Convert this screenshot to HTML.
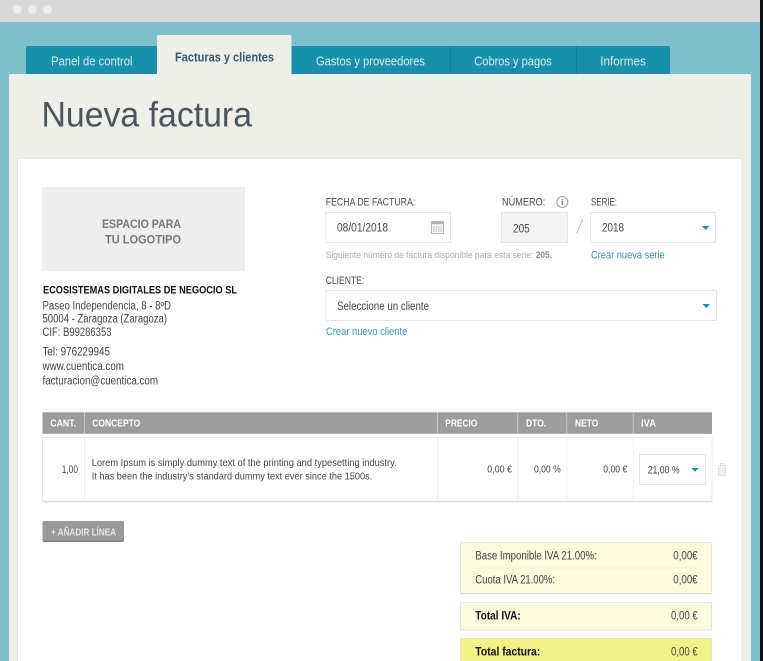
<!DOCTYPE html>
<html lang="es">
<head>
<meta charset="utf-8">
<title>Nueva factura</title>
<style>
html,body{margin:0;padding:0;width:763px;height:661px;overflow:hidden;background:#fff}
svg{display:block;position:absolute;left:0;top:0}
text{font-family:"Liberation Sans",sans-serif;white-space:pre}
.b{font-weight:bold}
.t{font-size:11.5px;fill:#444}
.l{font-size:11px;fill:#4a4a4a}
.k{font-size:11px;fill:#2f9ab0}
.h{font-size:10px;font-weight:bold;fill:#fff}
.tab{font-size:13px;fill:#d9eef2}
</style>
</head>
<body>
<svg width="763" height="661" viewBox="0 0 763 661" xmlns="http://www.w3.org/2000/svg">
<rect x="0" y="0" width="760" height="22" fill="#d8d8d8"/>
<rect x="0" y="22" width="760" height="639" fill="#7dc0cc"/>
<rect x="760" y="0" width="3" height="661" fill="#111"/>
<circle cx="17.300" cy="9.500" r="4.500" fill="#eeeee6"/>
<circle cx="32.300" cy="9.500" r="4.500" fill="#eeeee6"/>
<circle cx="47.300" cy="9.500" r="4.500" fill="#eeeee6"/>

<path d="M26 75V48a2 2 0 0 1 2-2H668a2 2 0 0 1 2 2V75Z" fill="#1690ab"/>
<path d="M450.500 46V75M576.500 46V75" stroke="#117f9a" fill="none"/>
<rect x="9" y="74" width="742" height="600" rx="2" fill="#efefea"/>
<path d="M157 75V37a2 2 0 0 1 2-2H289.500a2 2 0 0 1 2 2V75Z" fill="#efefea"/>
<text class="tab" x="51" y="65.500" textLength="81.500" lengthAdjust="spacingAndGlyphs">Panel de control</text>
<text class="b" x="175" y="61.500" font-size="12.500" fill="#2f5a70" textLength="99" lengthAdjust="spacingAndGlyphs">Facturas y clientes</text>
<text class="tab" x="316" y="65.500" textLength="109" lengthAdjust="spacingAndGlyphs">Gastos y proveedores</text>
<text class="tab" x="474.300" y="65.500" textLength="77.500" lengthAdjust="spacingAndGlyphs">Cobros y pagos</text>
<text class="tab" x="600.300" y="65.500" textLength="45.500" lengthAdjust="spacingAndGlyphs">Informes</text>
<text x="41.500" y="126.700" font-size="35.500" fill="#4a555d" textLength="210.500" lengthAdjust="spacingAndGlyphs">Nueva factura</text>

<rect x="17.500" y="158.500" width="724.500" height="520" fill="#fff" stroke="#e5e5e1"/>

<rect x="42" y="187" width="203" height="84" fill="#eee"/>
<text class="b" x="102" y="228" font-size="11.500" fill="#777" textLength="79" lengthAdjust="spacingAndGlyphs">ESPACIO PARA</text>
<text class="b" x="105" y="243.500" font-size="11.500" fill="#777" textLength="76" lengthAdjust="spacingAndGlyphs">TU LOGOTIPO</text>
<text class="b" x="43" y="293.300" font-size="11px" fill="#111" textLength="194" lengthAdjust="spacingAndGlyphs">ECOSISTEMAS DIGITALES DE NEGOCIO SL</text>
<text class="t" x="42.500" y="309.500" textLength="128.500" lengthAdjust="spacingAndGlyphs">Paseo Independencia, 8 - 8ºD</text>
<text class="t" x="42.500" y="322.700" textLength="124.500" lengthAdjust="spacingAndGlyphs">50004 - Zaragoza (Zaragoza)</text>
<text class="t" x="42.500" y="336" textLength="69" lengthAdjust="spacingAndGlyphs">CIF: B99286353</text>
<text class="t" x="42.500" y="355.700" textLength="67.500" lengthAdjust="spacingAndGlyphs">Tel: 976229945</text>
<text class="t" x="42.500" y="370" textLength="81.500" lengthAdjust="spacingAndGlyphs">www.cuentica.com</text>
<text class="t" x="42.500" y="384.300" textLength="115.500" lengthAdjust="spacingAndGlyphs">facturacion@cuentica.com</text>

<text class="l" x="325.700" y="205.300" textLength="89.600" lengthAdjust="spacingAndGlyphs">FECHA DE FACTURA:</text>
<rect x="326" y="212.500" width="124.500" height="30" fill="#fff" stroke="#e6e6e6"/>
<text class="t" x="337" y="231.700" textLength="51" lengthAdjust="spacingAndGlyphs">08/01/2018</text>
<g fill="none" stroke="#b4b4b4">
<rect x="431.500" y="221.500" width="12" height="12" fill="#f6f6f6"/>
<path d="M431.500 223h12" stroke-width="2.500"/>
<path d="M433 227h9M433 229h9M433 231h9" stroke-dasharray="1.500 1" stroke-width="1"/>
</g>

<text class="l" x="502" y="205.300" textLength="43.300" lengthAdjust="spacingAndGlyphs">NÚMERO:</text>
<circle cx="562.300" cy="202" r="5.500" fill="none" stroke="#a0a0a0" stroke-width="1.100"/>
<rect x="561.600" y="201" width="1.500" height="4" fill="#888"/>
<rect x="561.600" y="198.800" width="1.500" height="1.400" fill="#888"/>
<rect x="501.500" y="212.500" width="66" height="30" fill="#f3f3f3" stroke="#e4e4e4"/>
<text class="t" x="513" y="232.300" textLength="16.700" lengthAdjust="spacingAndGlyphs">205</text>
<path d="M576.700 233.300L582.700 219.300" stroke="#b0b0b0" fill="none"/>

<text class="l" x="591" y="205.300" textLength="26" lengthAdjust="spacingAndGlyphs">SERIE:</text>
<rect x="590.500" y="212.500" width="125" height="30" fill="#fff" stroke="#e6e6e6"/>
<text class="t" x="602" y="231.700" textLength="22" lengthAdjust="spacingAndGlyphs">2018</text>
<path d="M702 226h7.500l-3.750 4z" fill="#1690ab"/>

<text x="325.700" y="258" font-size="9.500px" fill="#aaa" textLength="207.600" lengthAdjust="spacingAndGlyphs">Siguiente número de factura disponible para esta serie:</text>
<text class="b" x="535.700" y="258" font-size="9.500px" fill="#888" textLength="16.300" lengthAdjust="spacingAndGlyphs">205.</text>
<text class="k" x="591" y="258.700" textLength="73.700" lengthAdjust="spacingAndGlyphs">Crear nueva serie</text>

<text class="l" x="325.700" y="284" textLength="38.600" lengthAdjust="spacingAndGlyphs">CLIENTE:</text>
<rect x="326" y="290.500" width="390.500" height="30" fill="#fff" stroke="#e6e6e6"/>
<text class="t" x="337" y="310" textLength="92" lengthAdjust="spacingAndGlyphs">Seleccione un cliente</text>
<path d="M702.500 304h7.500l-3.750 4z" fill="#1690ab"/>
<text class="k" x="326" y="335" textLength="81.300" lengthAdjust="spacingAndGlyphs">Crear nuevo cliente</text>

<rect x="42.500" y="412.300" width="669.500" height="21.500" fill="#9b9c9b"/>
<path d="M84.500 412v22M437.500 412v22M517.700 412v22M566.700 412v22M633.300 412v22" stroke="#c8c8c8" fill="none"/>
<text class="h" x="50.300" y="426.500" textLength="25.700" lengthAdjust="spacingAndGlyphs">CANT.</text>
<text class="h" x="92.300" y="426.500" textLength="48" lengthAdjust="spacingAndGlyphs">CONCEPTO</text>
<text class="h" x="445.300" y="426.500" textLength="32" lengthAdjust="spacingAndGlyphs">PRECIO</text>
<text class="h" x="526" y="426.500" textLength="20.300" lengthAdjust="spacingAndGlyphs">DTO.</text>
<text class="h" x="575" y="426.500" textLength="23.300" lengthAdjust="spacingAndGlyphs">NETO</text>
<text class="h" x="641" y="426.500" textLength="15" lengthAdjust="spacingAndGlyphs">IVA</text>

<rect x="42.500" y="437.500" width="669.500" height="64" fill="#fff" stroke="#e8e8e8"/>
<path d="M42.500 501.500H712" stroke="#dcdcdc" stroke-width="1.500"/>
<path d="M84.500 438v63M437.500 438v63M517.700 438v63M566.700 438v63M633.300 438v63" stroke="#f0f0f0" fill="none"/>
<text x="61.700" y="473" font-size="11px" fill="#444" textLength="16.300" lengthAdjust="spacingAndGlyphs">1,00</text>
<text x="91.700" y="466" font-size="10.500px" fill="#444" textLength="305" lengthAdjust="spacingAndGlyphs">Lorem Ipsum is simply dummy text of the printing and typesetting industry.</text>
<text x="91.700" y="479.300" font-size="10.500px" fill="#444" textLength="280.600" lengthAdjust="spacingAndGlyphs">It has been the industry's standard dummy text ever since the 1500s.</text>
<text x="487.300" y="472.700" font-size="10.500px" fill="#444" textLength="24.700" lengthAdjust="spacingAndGlyphs">0,00 €</text>
<text x="534" y="472.700" font-size="10.500px" fill="#444" textLength="26.700" lengthAdjust="spacingAndGlyphs">0,00 %</text>
<text x="603.300" y="472.700" font-size="10.500px" fill="#444" textLength="24" lengthAdjust="spacingAndGlyphs">0,00 €</text>
<rect x="639.500" y="454.500" width="66" height="30" fill="#fff" stroke="#e6e6e6"/>
<text x="647.700" y="473.300" font-size="11px" fill="#444" textLength="32" lengthAdjust="spacingAndGlyphs">21,00 %</text>
<path d="M691.300 468h7.500l-3.750 3.800z" fill="#1690ab"/>
<g fill="none" stroke="#dcdcdc">
<path d="M717.500 465.500h9M720.500 465v-1.500h3V465"/>
<path d="M718.500 466.500v9h7v-9" fill="#eee"/>
</g>

<rect x="42.500" y="521" width="81.500" height="21" rx="2" fill="#7d7d7d"/>
<rect x="42.500" y="521" width="81.500" height="19.500" rx="2" fill="#999a99"/>
<text x="51" y="535.300" font-size="10px" font-weight="bold" fill="#e6e6e6" textLength="65" lengthAdjust="spacingAndGlyphs">+ AÑADIR LÍNEA</text>

<rect x="460.500" y="542.500" width="251" height="51" fill="#fbfadd" stroke="#e6e6e0"/>
<path d="M460.500 593.800h251" stroke="#deded8"/>
<text class="t" x="475.300" y="559.300" textLength="121.400" lengthAdjust="spacingAndGlyphs">Base Imponible IVA 21.00%:</text>
<text class="t" x="673.300" y="559.300" textLength="24.400" lengthAdjust="spacingAndGlyphs">0,00€</text>
<path d="M475 568h223" stroke="#efefdc" fill="none"/>
<text class="t" x="475.300" y="583.700" textLength="79.700" lengthAdjust="spacingAndGlyphs">Cuota IVA 21.00%:</text>
<text class="t" x="673.300" y="583.700" textLength="24.400" lengthAdjust="spacingAndGlyphs">0,00€</text>

<rect x="460.500" y="602.500" width="251" height="27.500" fill="#fbfadd" stroke="#e6e6e0"/>
<path d="M460.500 629.800h251" stroke="#deded8"/>
<text class="b" x="475.300" y="619.300" font-size="11.500px" fill="#111" textLength="45.400" lengthAdjust="spacingAndGlyphs">Total IVA:</text>
<text class="t" x="671" y="619.300" textLength="26.700" lengthAdjust="spacingAndGlyphs">0,00 €</text>

<rect x="460.500" y="638.500" width="251" height="30" fill="#f2f286" stroke="#e4e4c8"/>
<text class="b" x="475.300" y="655.300" font-size="11.500px" fill="#111" textLength="65" lengthAdjust="spacingAndGlyphs">Total factura:</text>
<text class="t" x="671" y="655.300" textLength="26.700" lengthAdjust="spacingAndGlyphs">0,00 €</text>
</svg>
</body>
</html>
